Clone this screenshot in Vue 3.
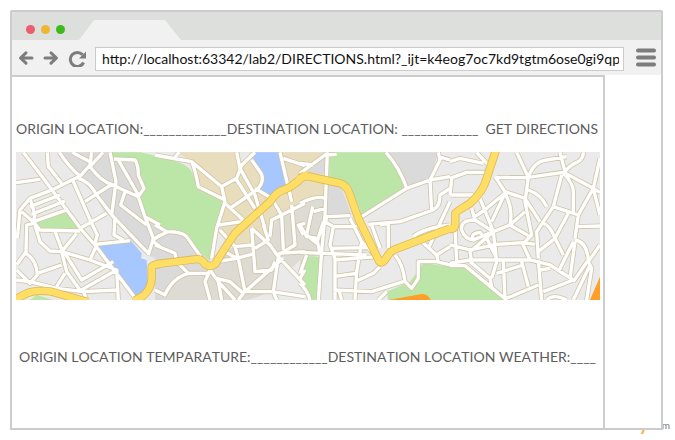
<script setup>
import { ref } from 'vue'

const address = ref('http://localhost:63342/lab2/DIRECTIONS.html?_ijt=k4eog7oc7kd9tgtm6ose0gi9qp')

// The map is drawn in four tiles, each on its own grid of one third of a unit.
const tiles = [
  {
    x: 10,
    areas: [
      ['block', 'M145 22H305L310 40 380 45 400 130 385 155 410 215 450 240V345L410 330 360 285 310 215 285 205 255 150 205 95Z'],
      ['park', 'M305 22H390L450 35V238L410 212 387 155 404 132 388 90Q388 45 370 40H308Z'],
      ['park', 'M75 228L165 197 210 258 90 252Z'],
      ['park', 'M60 465L80 450 130 465Z'],
      ['water', 'M265 303L362 287 395 325 393 340 410 345 415 440 385 462Z']
    ],
    roads: [
      'M40 22L100 100 215 255 255 300 380 465', 'M18 113L90 103', 'M112 22L115 65 155 115',
      'M148 22Q180 70 212 95', 'M130 133L212 92 240 60 245 22', 'M186 22L240 50', 'M279 22L240 65Q275 110 305 118L340 135 385 155',
      'M300 22L318 110 305 210', 'M312 42L375 45Q385 60 385 90L402 130 385 155 405 215 430 280 415 330',
      'M325 45L385 150', 'M305 118L225 170', 'M260 150L310 215 415 325', 'M345 140L332 180 410 240', 'M405 215L450 240',
      'M188 105L245 235 262 270 255 295', 'M205 100Q240 110 260 150', 'M130 133L60 160 30 195 22 280', 'M60 185L150 150',
      'M65 208L165 168', 'M60 160L75 210 70 230 175 193', 'M35 200L70 230 90 255 210 258', 'M210 250L290 205',
      'M70 235L50 240 48 320 20 360', 'M75 240L90 290 120 318 155 320 240 345 260 300', 'M255 298L360 287',
      'M315 215L312 270 340 285', 'M48 325Q80 345 82 390L60 415 20 375', 'M82 385L155 360', 'M155 320L170 380 210 435',
      'M155 320L200 265', 'M135 260L158 320', 'M165 325L215 405 310 350', 'M240 345L320 375 205 440', 'M140 425L165 385',
      'M18 405L60 410 140 430 220 440 320 435', 'M320 375L325 465', 'M220 440L230 465', 'M430 285L450 270M430 290L450 305'
    ],
    main: 'M10 466L50 445Q80 433 125 440L230 470M375 466L400 452Q425 430 425 400V365Q430 359 450 357'
  },
  {
    x: 155,
    areas: [
      ['block', 'M0 235L95 275 165 350 170 375 100 390 30 465H0Z'],
      ['sand', 'M70 22H450V170L370 210 345 270 290 300 240 305 190 250 200 170 120 120 105 50Z'],
      ['clay', 'M240 305L290 300V250L330 290 375 210 450 170V330L350 430 345 465H270L170 375 200 320Z'],
      ['clay', 'M30 465L40 430 60 400 120 390 170 375 270 450V465Z'],
      ['land', 'M350 430L370 335 450 420V465H280L350 440Z'],
      ['land', 'M255 22H300L255 65Z'],
      ['park', 'M0 38Q90 45 110 80L130 128 205 170 175 270 165 348 95 280 0 235Z'],
      ['park', 'M435 400L450 375V430Z'],
      ['water', 'M295 22H375L395 115 345 160 312 130 320 95 293 40Z']
    ],
    roads: [
      'M0 30L65 42 110 50 200 125', 'M60 42Q65 25 75 22', 'M110 50Q120 70 130 125L210 165', 'M200 125L245 100 260 60 300 22',
      'M245 22L255 70 300 150 330 250', 'M200 125L210 170 185 250 170 340', 'M225 190L305 135Q330 110 318 85L290 45',
      'M245 105L300 190', 'M300 130L350 160 380 210', 'M375 22L410 170', 'M385 40L450 62', 'M190 240L260 230',
      'M205 170L265 225', 'M345 275L350 225 450 175', 'M380 210L385 315', 'M410 180L420 300 370 330', 'M450 235L430 240 445 270',
      'M290 250L300 380 350 375 360 350', 'M290 250L345 300 370 335 450 420', 'M300 310L340 285 325 240', 'M240 305L250 340 270 440',
      'M195 255L240 305 290 300', 'M200 315L245 340 300 325', 'M185 350L245 340', 'M370 325L450 320', 'M370 335L355 440 365 465',
      'M270 440L385 340', 'M165 375L150 410 165 465', 'M165 375L190 410 200 465', 'M185 400L225 410 265 445 250 465',
      'M270 440L350 440 450 455', 'M190 410L240 465', 'M0 240L35 260Q80 260 95 275L165 375', 'M35 262L0 280',
      'M0 300L60 325 65 350 100 385 165 385', 'M100 385Q50 400 30 450L0 435', 'M435 400L450 375'
    ],
    main: 'M8 357L130 342Q145 345 150 358 165 368 180 358 215 300 240 265L345 170Q365 140 385 135 410 128 450 90'
  },
  {
    x: 300,
    areas: [
      ['sand', 'M0 22H75L30 80 75 90V160L0 175Z'],
      ['block', 'M20 80L80 25V90Z'],
      ['block', 'M80 110L125 130 155 210H80Z'],
      ['clay', 'M0 175L75 160 65 320 0 370Z'],
      ['park', 'M88 22H258Q300 70 318 130L185 215Q165 120 88 100Z'],
      ['block', 'M265 22H415L390 105 325 125Z'],
      ['park', 'M20 335H60L50 465H30L0 420V385Z'],
      ['park', 'M260 440L330 410 370 355 450 365V465H265Z'],
      ['alert', 'M265 465L365 447Q382 445 393 465Z']
    ],
    roads: [
      'M82 22L75 210 65 320 55 465', 'M0 55L40 60', 'M0 85L75 30 110 28', 'M258 22Q300 70 320 130', 'M185 215L320 130 390 105 450 95',
      'M415 22L420 45 390 105 395 195Q420 190 420 150L450 130', 'M415 35L450 45', 'M0 175Q50 150 75 160', 'M38 185L20 270 50 295 70 230',
      'M40 200L75 190', 'M0 240L20 275 50 280', 'M75 240L80 215 150 212', 'M75 230L100 245 170 245', 'M205 238L300 230 400 195',
      'M215 240L240 310', 'M240 240L265 235 265 310', 'M100 245L90 300 105 340V465', 'M90 310L200 308', 'M0 322L70 325 200 330',
      'M150 220L185 290 225 330', 'M185 290L170 380 165 465', 'M100 345L230 335', 'M100 395L170 385', 'M100 435L215 440 310 410',
      'M240 365L220 385 165 410', 'M50 280L60 325', 'M20 330L0 385', 'M285 330Q310 360 315 410L335 430 355 400V350L410 350 450 360',
      'M340 275Q370 250 450 240', 'M360 285L410 330 450 305', 'M385 310L450 170', 'M410 330L415 350', 'M0 415Q25 440 30 465', 'M260 440L235 465', 'M118 440L125 465'
    ],
    main: 'M0 100Q10 92 30 95L120 115Q140 120 150 150L175 220 237 348Q244 358 252 348L265 330Q270 320 285 313L450 250'
  },
  {
    x: 450,
    areas: [
      ['park', 'M0 365L45 368 165 465H0Z'],
      ['alert', 'M420 465L450 395V465Z']
    ],
    roads: [
      'M0 50L30 40 100 55', 'M80 22L115 60', 'M0 100L50 82H105', 'M0 150L5 100M0 150H70', 'M140 98L235 97 340 82 430 130',
      'M135 95L165 140 225 160 270 230', 'M200 22L235 97 225 170 245 270 225 290', 'M235 97Q250 50 290 45L350 35', 'M330 22L345 80Q360 60 385 50 400 40 400 22',
      'M450 40L430 130 385 210', 'M430 130L450 210', 'M430 130L450 142', 'M340 85Q375 120 370 150V205', 'M335 90L310 185 260 260 265 340',
      'M235 135Q275 150 290 185', 'M310 185L385 210 375 280', 'M385 245L450 243', 'M165 145L125 230', 'M165 145Q190 190 180 240L225 200',
      'M165 145L110 190 75 215', 'M90 160L130 260', 'M65 190L75 225Q30 225 35 255 45 285 75 285', 'M75 225L130 260 180 240 240 275',
      'M130 260L70 285Q60 265 90 262L100 275', 'M130 260L60 320 65 350', 'M130 260L140 350 125 400', 'M15 250L20 350',
      'M0 300L60 315 140 298 220 293 255 298', 'M215 290L240 345', 'M0 355L60 345H240L300 360 370 405', 'M110 280L140 340',
      'M60 350L120 400 125 425', 'M0 362H45L170 465', 'M140 385L220 360', 'M160 350L165 460', 'M215 350L235 425',
      'M170 460L265 420', 'M265 345L275 465', 'M265 320L315 280 355 205', 'M280 235Q300 240 315 280L340 330', 'M370 290L325 380',
      'M375 290L360 400', 'M375 285Q410 290 415 345L370 410', 'M450 300L415 350 425 370 410 465', 'M370 405L280 440', 'M370 465L420 360',
      'M270 375L300 370M290 465Q310 445 350 465'
    ],
    main: 'M0 252H5Q16 250 16 235V205Q18 200 60 175 100 140 110 100L138 15'
  }
]
const place = (tile) => `translate(${tile.x} 145) scale(.3333)`
</script>

<template>
  <div class="desk">
    <a class="brand" href="#"><span class="blue">createl</span><span class="amber">y</span><small>.com</small></a>
    <main class="browser">
      <header class="tabs">
        <span class="dot red"></span><span class="dot yellow"></span><span class="dot green"></span>
        <svg class="tab" viewBox="0 0 102 20" aria-hidden="true"><path d="M0 20L15 0H86L102 20Z" /></svg>
      </header>
      <nav class="toolbar">
        <button type="button" aria-label="Back">
          <svg width="16" height="16" viewBox="0 0 16 16"><path class="line" d="M8 2.8L2.5 8 8 13.2M3 8H14" /></svg>
        </button>
        <button type="button" aria-label="Forward">
          <svg width="16" height="16" viewBox="0 0 16 16"><path class="line" d="M8 2.8L13.5 8 8 13.2M13 8H2" /></svg>
        </button>
        <button type="button" aria-label="Reload">
          <svg width="18" height="18" viewBox="0 0 18 18"><path class="ring" d="M14.6 5.8A7 7 0 1 0 15.6 13.5" /><path class="solid" d="M18 2.5V9.5H11Z" /></svg>
        </button>
        <input v-model="address" class="address" type="text" aria-label="Address" spellcheck="false" />
        <button class="menu" type="button" aria-label="Menu">
          <svg width="20" height="20" viewBox="0 0 20 20"><path class="bars" d="M2 2.5H18M2 9.5H18M2 16.5H18" /></svg>
        </button>
      </nav>
      <section class="page">
        <form class="row" @submit.prevent>
          <span>ORIGIN LOCATION:_____________DESTINATION LOCATION: ____________</span>
          <button class="go" type="submit">GET DIRECTIONS</button>
        </form>
        <svg class="map" viewBox="16 152 584 148" role="img" aria-label="Map">
          <rect class="land" x="16" y="152" width="584" height="148" />
          <g v-for="t in tiles" :key="t.x" :transform="place(t)">
            <path v-for="(a, i) in t.areas" :key="i" :class="a[0]" :d="a[1]" />
          </g>
          <g v-for="t in tiles" :key="t.x" :transform="place(t)"><path class="edge" :d="t.roads.join('')" /></g>
          <g v-for="t in tiles" :key="t.x" :transform="place(t)"><path class="road" :d="t.roads.join('')" /></g>
          <g v-for="t in tiles" :key="t.x" :transform="place(t)"><path class="main-edge" :d="t.main" /></g>
          <g v-for="t in tiles" :key="t.x" :transform="place(t)"><path class="main-road" :d="t.main" /></g>
        </svg>
        <p class="row result">ORIGIN LOCATION TEMPARATURE:____________DESTINATION LOCATION WEATHER:____</p>
      </section>
    </main>
  </div>
</template>

<style>
body { margin: 0; background: #fff; }
</style>

<style scoped>
.desk { position: relative; padding: 10px 12px 10px 10px; font-family: Lato, "Liberation Sans", sans-serif; font-size: 14px; line-height: 20px; font-kerning: none; color: #5c5c5c; }
.browser { position: relative; border: 2px solid #ccc; border-radius: 2px 2px 0 0; background: #fff; }
.tabs { display: flex; align-items: center; gap: 6px; height: 28px; padding-left: 14px; background: #dcdfdc; }
.dot { width: 9px; height: 9px; margin-top: 7px; border-radius: 50%; }
.red { background: #eb5e6e; }
.yellow { background: #ecb731; }
.green { background: #3cba1c; }
.tab { align-self: flex-end; width: 102px; height: 20px; margin-left: 8px; fill: #f1f1f1; }
.toolbar { display: flex; align-items: center; gap: 9px; height: 35px; padding: 0 5px 0 6px; background: #f1f1f1; }
button { display: flex; padding: 0; border: 0; background: none; color: inherit; font: inherit; font-kerning: none; }
.line, .ring, .bars { fill: none; stroke: #7d7d7d; stroke-width: 3; stroke-linecap: round; stroke-linejoin: round; }
.ring { stroke-linecap: butt; }
.bars { stroke-width: 4; }
.solid { fill: #7d7d7d; }
.address { flex: 1; min-width: 0; box-sizing: border-box; height: 24px; margin-top: 3px; padding: 0 4px 2px 6px; border: 1px solid #ccc; border-radius: 0; background: #fff; color: #111; font: inherit; font-kerning: none; outline: 0; }
.menu { margin-left: 3px; }
.page { display: flex; flex-direction: column; margin-right: 56px; padding: 42px 3px 61px 4px; border-top: 2px solid #ccc; border-right: 2px solid #ccc; }
.row { display: flex; gap: 7px; margin: 0; white-space: nowrap; }
.map { display: block; width: 100%; margin-top: 13px; }
.result { margin-top: 47px; padding-left: 3px; }
.land { fill: #eaeaea; }
.block { fill: #dadada; }
.sand { fill: #e8ddbd; }
.clay { fill: #dedad4; }
.park { fill: #bce6a8; }
.water { fill: #a6c7ff; }
.alert { fill: #ff9f27; }
.edge, .road, .main-edge, .main-road { fill: none; stroke-linejoin: round; }
.edge { stroke: #d0c6a8; stroke-width: 15; }
.road { stroke: #fff; stroke-width: 10; }
.main-edge { stroke: #dfb957; stroke-width: 25; }
.main-road { stroke: #ffde65; stroke-width: 20; stroke-linecap: round; }
.brand { position: absolute; right: 5px; bottom: 6px; display: flex; align-items: flex-end; font-size: 20px; line-height: 24px; font-weight: 700; text-decoration: none; }
.blue { color: #a9d1ea; }
.amber { color: #fbb45c; }
.brand small { color: #777; font-size: 10px; line-height: 18px; font-weight: 400; }
</style>
